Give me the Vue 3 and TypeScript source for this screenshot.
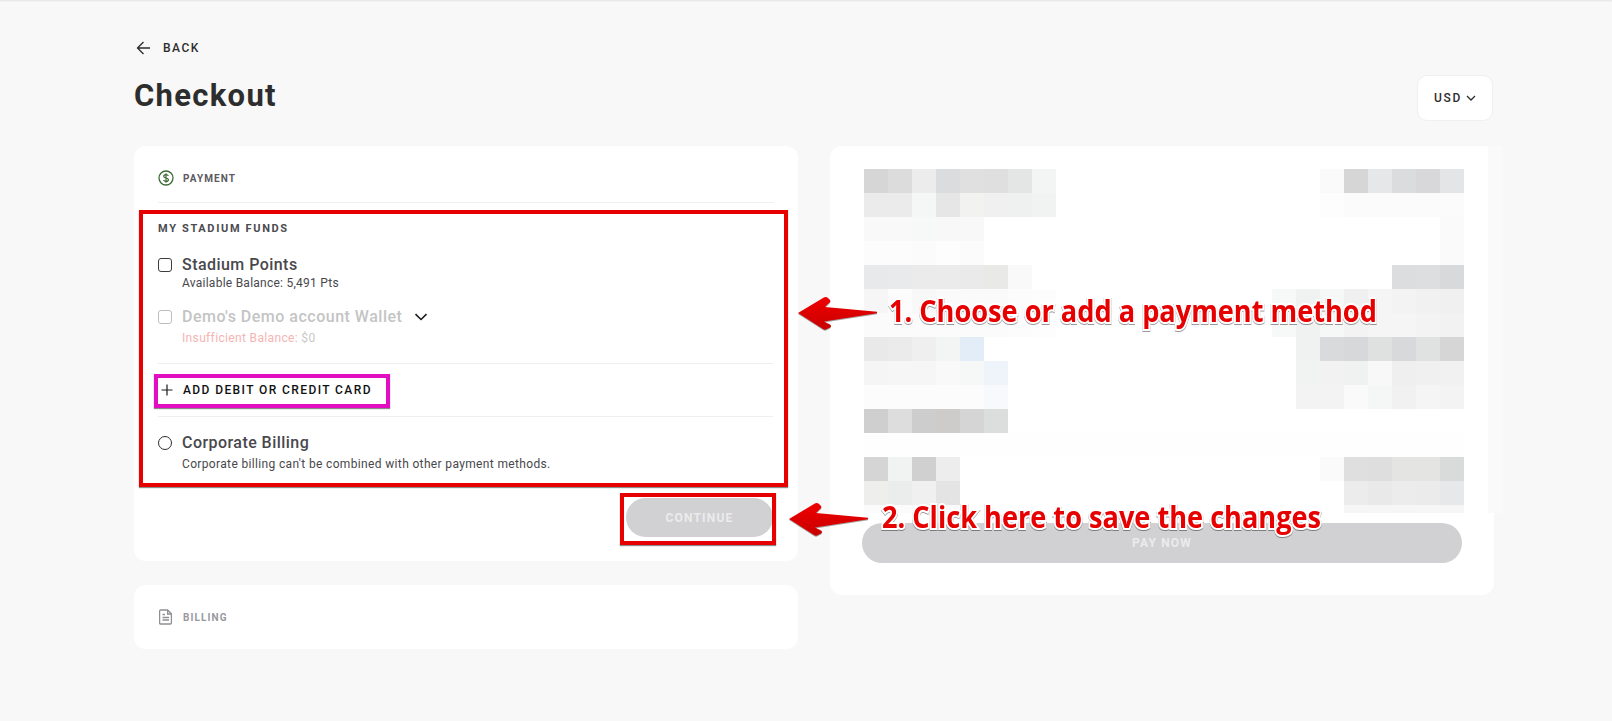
<script setup lang="ts">
// mosaic rows of the censored order summary: 25 columns, '' stays white
const r = (left: string[], right: string[] = []): string[] => {
  const cells: string[] = new Array(25).fill('')
  left.forEach((c, i) => { cells[i] = c })
  right.forEach((c, i) => { cells[25 - right.length + i] = c })
  return cells
}
const mosaic: string[][] = [
  r(['#d6d6d6', '#dcdcdc', '#ececec', '#dbdcde', '#e0e0e0', '#dfdfdf', '#e4e5e5', '#f3f5f4'], ['#fafafa', '#d6d6d6', '#e6e7e8', '#dbdcde', '#d8d8da', '#e4e5e7']),
  r(['#ebebeb', '#ebebeb', '#f5f7f6', '#e6e6e6', '#f2f2f1', '#f0f0f0', '#eff1f0', '#f1f3f2'], ['#fdfdfd', '#fbfbfb', '#fbfbfb', '#fbfbfb', '#fbfbfb', '#fbfbfb']),
  r(['#f9f9f9', '#f9f9f9', '#f7f8f8', '#f8f8f8', '#f8f8f8'], ['#fafafa']),
  r(['#fcfcfc', '#fcfcfc', '#fbfbfb', '#fdfdfd', '#fbfbfb'], ['#fafafa']),
  r(['#e8e9eb', '#e9eaeb', '#eaebea', '#ebebeb', '#eaeaea', '#e9e9e8', '#f9f9f9'], ['#dcdddf', '#dddee0', '#d8d9da']),
  r(['#f6f6f6', '#fcfcfc', '#f8f8f8', '#fafafa', '#fafafa', '#fafafa', '#fcfcfc', '#fdfdfd'], ['#f7f8f8', '#f0f1f1', '#f6f7f7', '#f0f0f0', '#f5f5f5', '#f3f3f3', '#f1f1f1', '#f0f0f0']),
  r(['#fbfbfb', '#fbfbfb', '#fbfbfb', '#fbfbfb', '#fbfbfb', '#fbfbfb', '#fcfcfc', '#fdfdfd'], ['#f7f8f8', '#f0f1f1', '#f6f7f7', '#f3f3f3', '#f5f5f5', '#f5f5f5', '#f3f3f3', '#f2f2f2']),
  r(['#e9e9e9', '#ebebeb', '#efefef', '#f3f5f4', '#e3edf7'], ['#f0f1f1', '#d9dadb', '#d7d8da', '#dfe0e0', '#d8d9db', '#e0e1e1', '#d6d6d7']),
  r(['#f5f5f5', '#f6f6f6', '#f6f6f6', '#f9f9f9', '#f6f7f7', '#eff4fb'], ['#f1f2f2', '#f2f2f2', '#f0f2f1', '#f8f8f8', '#efefef', '#f0f0f0', '#f1f1f1']),
  r(['#fcfcfc', '#fcfcfc', '#fcfcfc', '#fcfcfc', '#fcfcfc', '#f7f9fc'], ['#f3f3f3', '#f3f3f3', '#fafafa', '#f5f6f6', '#f1f1f1', '#f5f5f5', '#f3f3f3']),
  r(['#cfcfcf', '#dcdddc', '#cdcdcd', '#cdcccb', '#d5d5d5', '#dcdddd']),
  r(new Array(25).fill('#fdfefd')),
  r(['#d5d5d5', '#f1f2f2', '#d0d0d0', '#ededed'], ['#fbfafa', '#dfdfdf', '#dedede', '#e4e4e2', '#e4e4e2', '#d9dbda']),
  r(['#eeeeed', '#ebecec', '#f0f0f0', '#e4e4e4'], ['#ececec', '#e9e9ea', '#ececec', '#ebebeb', '#e7e8e9']),
  r(['#fbfbfb', '#fbfbfb', '#fbfbfb', '#fbfbfb'], ['#f6f6f6', '#f6f6f6', '#f6f6f6', '#f6f6f6', '#f6f6f6']),
]
</script>

<template>
  <div class="page">
    <div class="top-shade"></div>

    <a class="back">
      <svg width="16" height="14" viewBox="0 0 16 14" fill="none" stroke="#2d2d2d" stroke-width="1.3">
        <path d="M16 7H3.500M9.500 1 3.500 7l6 6" />
      </svg>
      <span>BACK</span>
    </a>

    <div class="title-row">
      <h1>Checkout</h1>
      <button class="currency">
        <span>USD</span>
        <svg width="10" height="6" viewBox="0 0 10 6" fill="none" stroke="#2d2d2d" stroke-width="1.3">
          <path d="M1 1l4 4 4-4" />
        </svg>
      </button>
    </div>

    <div class="columns">
      <div class="left">
        <section class="card payment">
          <header class="card-head">
            <svg width="16" height="16" viewBox="0 0 16 16" fill="none" stroke="#3d6b35">
              <circle cx="8" cy="8" r="7" stroke-width="1.3" />
              <path d="M10.400 5.800C10 4.900 9 4.600 8 4.600c-1.300 0-2.300.6-2.300 1.700 0 2.400 4.700 1 4.700 3.400 0 1.100-1.100 1.700-2.400 1.700-1.100 0-2.100-.4-2.500-1.300M8 3.200v9.600" stroke-width="1.200" />
            </svg>
            <span>PAYMENT</span>
          </header>

          <div class="funds">
            <h3>MY STADIUM FUNDS</h3>

            <div class="option points">
              <span class="check"></span>
              <div>
                <div class="name">Stadium Points</div>
                <div class="note">Available Balance: 5,491 Pts</div>
              </div>
            </div>

            <div class="option wallet">
              <span class="check off"></span>
              <div>
                <div class="name-row">
                  <span class="name off">Demo's Demo account Wallet</span>
                  <svg width="14" height="8" viewBox="0 0 14 8" fill="none" stroke="#1c1c1c" stroke-width="1.600">
                    <path d="M1.500 1.200 7 6.500l5.500-5.300" />
                  </svg>
                </div>
                <div class="note low"><span class="warn">Insufficient Balance:</span> <span class="zero">$0</span></div>
              </div>
            </div>

            <div class="add-card">
              <svg width="12" height="12" viewBox="0 0 12 12" fill="none" stroke="#1c1c1c" stroke-width="1.200">
                <path d="M6 .5v11M.5 6h11" />
              </svg>
              <span>ADD DEBIT OR CREDIT CARD</span>
            </div>

            <div class="option corporate">
              <span class="radio"></span>
              <div>
                <div class="name">Corporate Billing</div>
                <div class="note wide">Corporate billing can't be combined with other payment methods.</div>
              </div>
            </div>
          </div>

          <div class="actions">
            <button class="pill continue">CONTINUE</button>
          </div>
        </section>

        <section class="card billing">
          <header class="card-head muted">
            <svg width="14" height="16" viewBox="0 0 14 16" fill="none" stroke="#8f8f94" stroke-width="1.300">
              <path d="M1.600 1h7l3.800 3.800v9c0 .7-.5 1.200-1.200 1.200H1.600C1 15 .6 14.500 .6 13.800V2.200C.6 1.500 1 1 1.600 1zM8.600 1v4h3.800M3.500 5.500h2.500M3.500 8.500h6.500M3.500 11h6.500" />
            </svg>
            <span>BILLING</span>
          </header>
        </section>
      </div>

      <section class="card summary">
        <div class="mosaic-cover">
          <div class="mosaic">
            <template v-for="(row, y) in mosaic" :key="y">
              <i v-for="(c, x) in row" :key="x" :style="{ background: c || 'transparent' }"></i>
            </template>
          </div>
        </div>
        <button class="pill pay">PAY NOW</button>
      </section>
    </div>

    <!-- screenshot annotations laid over the page -->
    <div class="mark mark-funds"></div>
    <div class="mark mark-add"></div>
    <div class="mark mark-continue"></div>

    <svg class="arrow arrow-one" width="84" height="36" viewBox="0 0 84 36">
      <defs>
        <linearGradient id="arrowFill" x1="0" y1="0" x2="0" y2="1">
          <stop offset="0" stop-color="#f00000" />
          <stop offset="1" stop-color="#c80000" />
        </linearGradient>
      </defs>
      <path d="M1 18 26 3Q29 1 31 3L33 5Q34 7 32 8L28 12 80 16.700V18.300L27 26.500 33 29.500Q35 31 33 32.500L30 34Q28 35.500 26 34Z" fill="url(#arrowFill)" />
    </svg>
    <svg class="arrow arrow-two" width="84" height="36" viewBox="0 0 84 36">
      <path d="M1 18 26 3Q29 1 31 3L33 5Q34 7 32 8L28 12 80 16.700V18.300L27 26.500 33 29.500Q35 31 33 32.500L30 34Q28 35.500 26 34Z" fill="url(#arrowFill)" />
    </svg>

    <div class="callout callout-one">1. Choose or add a payment method</div>
    <div class="callout callout-two">2. Click here to save the changes</div>
  </div>
</template>

<style>
html, body { margin: 0; background: #f8f8f8; }
</style>

<style scoped>
.page {
  position: relative;
  box-sizing: border-box;
  height: 721px;
  padding: 0 118px 0 134px;
  background: #f8f8f8;
  color: #2d2d2d;
  font-family: Roboto, "Liberation Sans", sans-serif;
  overflow: hidden;
}
.top-shade {
  position: absolute;
  left: 0;
  right: 0;
  top: 0;
  height: 2px;
  background: linear-gradient(#e4e4e4, #f6f6f6);
}
.back {
  display: flex;
  align-items: center;
  gap: 13px;
  padding-top: 41px;
  height: 14px;
  font-size: 12px;
  font-weight: 500;
  letter-spacing: 1.5px;
}
.title-row {
  display: flex;
  justify-content: space-between;
  align-items: center;
  margin-top: 20px;
  height: 46px;
  padding-right: 1px;
}
h1 {
  margin: 0 0 6px;
  font-size: 31px;
  font-weight: 700;
  letter-spacing: 1.3px;
  color: #2d2d2d;
}
.currency {
  display: flex;
  align-items: center;
  justify-content: center;
  gap: 4px;
  width: 76px;
  height: 46px;
  padding: 0;
  background: #fff;
  border: 1px solid #f0f0f0;
  border-radius: 10px;
  font: 500 12px Roboto, sans-serif;
  letter-spacing: 1.6px;
  color: #2d2d2d;
}
.columns {
  display: grid;
  grid-template-columns: 664px 664px;
  gap: 32px;
  align-items: start;
  margin-top: 25px;
}
.left { display: flex; flex-direction: column; gap: 24px; }
.card { background: #fff; border-radius: 12px; }
.payment { height: 415px; padding: 0 24px; box-sizing: border-box; }
.billing { height: 64px; padding: 0 24px; box-sizing: border-box; }
.card-head {
  display: flex;
  align-items: center;
  gap: 9px;
  height: 57px;
  font-size: 10px;
  font-weight: 700;
  letter-spacing: 1.1px;
  color: #5a5a60;
  border-bottom: 1px solid #efefef;
  box-sizing: border-box;
  padding-top: 8px;
}
.card-head.muted {
  height: 64px;
  margin-left: 1px;
  border: 0;
  padding-top: 0;
  gap: 10px;
  color: #98989d;
}
.funds { padding-top: 18px; margin-right: 1px; }
h3 {
  margin: 0;
  font-size: 11px;
  line-height: 16px;
  font-weight: 700;
  letter-spacing: 1.65px;
  color: #4b4b50;
}
.option { display: flex; gap: 10px; }
.points { margin-top: 19px; }
.wallet { margin-top: 17px; }
.corporate { margin-top: 17px; }
.check {
  box-sizing: border-box;
  width: 14px;
  height: 14px;
  margin-top: 2px;
  border: 1.5px solid #3c3c3c;
  border-radius: 3px;
}
.check.off { border-color: #bdbdbd; }
.radio {
  box-sizing: border-box;
  width: 14px;
  height: 14px;
  margin-top: 2px;
  border: 1.5px solid #2d2d2d;
  border-radius: 50%;
}
.name {
  font-size: 16px;
  line-height: 18px;
  font-weight: 500;
  letter-spacing: 0.45px;
  color: #48484c;
}
.name.off { color: #c4c4c4; letter-spacing: 0.5px; }
.name-row { display: flex; align-items: center; gap: 12px; }
.note {
  margin-top: 1px;
  font-size: 12px;
  line-height: 16px;
  letter-spacing: 0.25px;
  color: #48484c;
}
.note.low { margin-top: 4px; letter-spacing: 0.35px; }
.note.wide { margin-top: 4px; letter-spacing: 0.35px; }
.warn { color: #f4b4b4; }
.zero { color: #c8c8c8; }
.add-card {
  display: flex;
  align-items: center;
  gap: 10px;
  height: 54px;
  margin-top: 17px;
  padding-left: 3px;
  border-top: 1px solid #efefef;
  border-bottom: 1px solid #efefef;
  box-sizing: border-box;
  font-size: 12px;
  font-weight: 500;
  letter-spacing: 1.4px;
  color: #111;
}
.actions { display: flex; justify-content: flex-end; margin-top: 26px; }
.pill {
  display: block;
  height: 40px;
  padding: 0;
  border: 0;
  border-radius: 20px;
  background: #d1d1d3;
  color: #ebebeb;
  font: 700 12px Roboto, sans-serif;
  letter-spacing: 1.2px;
}
.continue { width: 147px; height: 39px; margin-right: 1px; }
.summary {
  position: relative;
  box-sizing: border-box;
  height: 449px;
  padding: 377px 32px 0;
}
.pay { width: 600px; }
.mosaic-cover {
  position: absolute;
  left: 0;
  top: 0;
  width: 658px;
  height: 367px;
  background: #fff;
  border-top-left-radius: 12px;
  border-right: 15px solid #fafafa;
  overflow: hidden;
}
.mosaic {
  display: grid;
  grid-template-columns: repeat(25, 24px);
  grid-auto-rows: 24px;
  padding: 23px 0 0 34px;
}
.mark {
  position: absolute;
  box-sizing: border-box;
  border: 4px solid #e60000;
  box-shadow: 0 1px 1px rgba(0, 0, 0, 0.45);
}
.mark-funds { left: 139px; top: 210px; width: 649px; height: 277px; }
.mark-add { left: 154px; top: 374px; width: 236px; height: 34px; border-color: #e30dc1; }
.mark-continue { left: 620px; top: 493px; width: 156px; height: 52px; }
.arrow { position: absolute; filter: drop-shadow(0 1px 0 rgba(0, 0, 0, 0.35)); }
.arrow-one { left: 797px; top: 295px; }
.arrow-two { left: 788px; top: 501px; }
.callout {
  position: absolute;
  font-family: "Open Sans", "Noto Sans", sans-serif;
  font-size: 30px;
  line-height: 36px;
  font-weight: 700;
  color: #e60000;
  white-space: nowrap;
  transform: scaleX(0.905);
  transform-origin: left center;
  -webkit-text-stroke: 4px #fff;
  paint-order: stroke fill;
  filter: drop-shadow(0 1px 0 rgba(0, 0, 0, 0.4));
}
.callout-one { left: 889px; top: 293px; }
.callout-two { left: 882px; top: 499px; }
</style>
